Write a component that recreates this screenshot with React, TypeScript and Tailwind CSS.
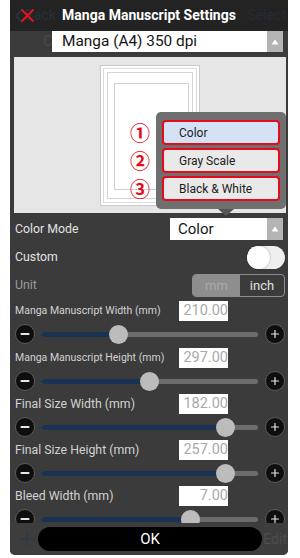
const font = { fontFamily: 'Roboto, "Liberation Sans", sans-serif' };

interface SliderRowProps {
  label: string;
  value: string;
  percent: number;
  small?: boolean;
  className?: string;
}

function Arrow() {
  return (
    <div className="w-[16px] h-full bg-[#b4b4b4] flex items-center justify-center">
      <svg width="8" height="6" viewBox="0 0 8 6">
        <path d="M4 0.5 L7.5 5.5 L0.5 5.5 Z" fill="#ffffff" />
      </svg>
    </div>
  );
}

function RoundButton({ plus }: { plus?: boolean }) {
  return (
    <div className="w-[20px] h-[20px] rounded-full bg-[#0e0e0e] border border-[#5a5a5a] flex items-center justify-center shrink-0">
      <svg width="10" height="10" viewBox="0 0 10 10">
        <path d="M1.5 5 H8.5" stroke="#e6e6e6" strokeWidth={plus ? 1.2 : 2.2} strokeLinecap="round" />
        {plus && <path d="M5 1.5 V8.5" stroke="#e6e6e6" strokeWidth="1.2" strokeLinecap="round" />}
      </svg>
    </div>
  );
}

function SliderRow({ label, value, percent, small, className }: SliderRowProps) {
  return (
    <div className={className}>

      {/* Label + value */}
      <div className="h-[20px] flex items-center">
        <div className={`w-[169px] pl-[5px] text-[#d2d2d2] whitespace-nowrap ${small ? "text-[10.5px]" : "text-[12.3px]"}`}>
          {label}
        </div>
        <div className="w-[49px] h-[20px] bg-white text-right text-[14.5px] leading-[20px] text-[#a9a9a9]">
          {value}
        </div>
      </div>

      {/* Slider */}
      <div className="h-[26px] flex items-center pl-[5px]">
        <RoundButton />
        <div className="relative w-[217px] h-[5px] ml-[6px] rounded-full bg-[#6c6c6c]">
          <div className="h-full rounded-full bg-[#1b3352]" style={{ width: `${percent}%` }} />
          <div
            className="absolute top-1/2 w-[19px] h-[19px] -mt-[9.5px] -ml-[9.5px] rounded-full bg-[#bcbcbc]"
            style={{ left: `${percent}%` }}
          />
        </div>
        <div className="ml-[7px]">
          <RoundButton plus />
        </div>
      </div>

    </div>
  );
}

export default function App() {
  const modes = ["Color", "Gray Scale", "Black & White"];
  const marks = ["①", "②", "③"];

  return (
    <div className="w-[300px] h-[558px] bg-white overflow-hidden pl-[10px]" style={font}>

      <div className="w-[278px] h-[555px] bg-[#3b3b3b] rounded-b-[5px] overflow-hidden flex flex-col">

        {/* Header */}
        <div className="relative h-[31px] shrink-0 bg-[#232323] flex items-center justify-center">
          <div className="absolute left-[4px] top-0 h-full flex items-center text-[14px] text-[#27313c]">
            <svg width="10" height="14" viewBox="0 0 10 14">
              <path d="M8 1 L2 7 L8 13" stroke="#27313c" strokeWidth="2" fill="none" />
            </svg>
            <span className="ml-[1px]">Back</span>
          </div>
          <svg className="absolute left-[10px] top-[8px]" width="15" height="15" viewBox="0 0 15 15">
            <path d="M1.5 1.5 L13.5 13.5 M13.5 1.5 L1.5 13.5" stroke="#e2151f" strokeWidth="2" />
          </svg>
          <div className="absolute right-[2px] top-0 h-full flex items-center text-[14px] text-[#252c35]">
            Select
          </div>
          <div className="relative text-[14px] font-bold text-white">
            Manga Manuscript Settings
          </div>
        </div>

        <div className="flex-1 overflow-hidden">

          {/* Preset dropdown */}
          <div className="h-[21px] flex items-center">
            <div className="w-[42px] pl-[33px] text-[15px] text-[#4a4a4a]">C</div>
            <div className="w-[231px] h-[21px] bg-white flex items-center">
              <div className="flex-1 pl-[10px] text-[15.4px] text-[#151515]">Manga (A4) 350 dpi</div>
              <Arrow />
            </div>
          </div>

          {/* Preview */}
          <div className="relative mt-[5px] ml-[4px] mr-[2px] h-[156px] bg-[#e6e6e6]">

            <div className="pt-[8px] pl-[86px]">
              <div className="w-[100px] h-[141px] bg-white border border-[#c9c9c9] p-[2px]">
                <div className="h-full border border-[#dadae2] p-[3px]">
                  <div className="h-full border border-[#d4d4dc] pt-[10px] pl-[6px] pr-[3px] pb-[8px]">
                    <div className="h-full border border-[#cfcfda]" />
                  </div>
                </div>
              </div>
            </div>

            {/* Color mode popup */}
            <div className="absolute left-[142px] top-[55px] w-[130px] h-[97px] rounded-[5px] bg-[#6f6f6f] px-[6px] pt-[8px] flex flex-col gap-[3px]">
              {modes.map((m, i) => (
                <div
                  key={m}
                  className={`h-[25px] rounded-[4px] border-2 border-[#e40b1a] pl-[15px] flex items-center text-[12px] text-[#1c1c1c] ${i === 0 ? "bg-[#d5e1f4]" : "bg-[#e9e9e9]"}`}
                >
                  {m}
                </div>
              ))}
              <div className="absolute left-[62px] -bottom-[7px] w-0 h-0 border-l-[8px] border-r-[8px] border-t-[7px] border-l-transparent border-r-transparent border-t-[#555555]" />
            </div>

            {/* Markers */}
            <div className="absolute left-[116px] top-[63px] flex flex-col gap-[3px]">
              {marks.map((n) => (
                <div
                  key={n}
                  className="h-[25px] flex items-center text-[20px] leading-[20px] font-bold text-[#e40b1a]"
                  style={{ fontFamily: '"Noto Sans CJK JP", "DejaVu Sans", sans-serif' }}
                >
                  {n}
                </div>
              ))}
            </div>

          </div>

          {/* Color Mode */}
          <div className="mt-[5px] h-[22px] flex items-center justify-between pl-[5px] pr-[5px]">
            <div className="text-[12.3px] text-[#e2e2e2]">Color Mode</div>
            <div className="w-[113px] h-[22px] bg-white flex items-center">
              <div className="flex-1 pl-[8px] text-[15px] text-[#151515]">Color</div>
              <Arrow />
            </div>
          </div>

          {/* Custom */}
          <div className="mt-[6px] h-[23px] flex items-center justify-between pl-[5px] pr-[3px]">
            <div className="text-[12.3px] text-[#e2e2e2]">Custom</div>
            <div className="w-[38px] h-[23px] rounded-full bg-[#efefef] flex items-center">
              <div className="w-[23px] h-[23px] rounded-full bg-white shadow-[0_0_2px_rgba(0,0,0,0.35)]" />
            </div>
          </div>

          {/* Unit */}
          <div className="mt-[5px] h-[23px] flex items-center justify-between pl-[5px] pr-[3px]">
            <div className="text-[12.3px] text-[#9c9c9c]">Unit</div>
            <div className="w-[93px] h-[23px] rounded-[4px] border border-[#8e8e8e] flex overflow-hidden text-[13px]">
              <div className="w-[47px] bg-[#8e8e8e] text-[#a9a9a9] flex items-center justify-center">mm</div>
              <div className="flex-1 text-[#e0e0e0] flex items-center justify-center">inch</div>
            </div>
          </div>

          <SliderRow className="mt-[4px]" label="Manga Manuscript Width (mm)" value="210.00" percent={35.5} small />
          <SliderRow className="mt-[1px]" label="Manga Manuscript Height (mm)" value="297.00" percent={50.2} small />
          <SliderRow label="Final Size Width (mm)" value="182.00" percent={85} />
          <SliderRow label="Final Size Height (mm)" value="257.00" percent={85} />
          <SliderRow label="Bleed Width (mm)" value="7.00" percent={69} />

        </div>

        {/* Footer */}
        <div className="h-[32px] shrink-0 bg-[#3d3d3d] flex items-center relative">
          <div className="absolute left-[10px] top-0 h-full flex items-center">
            <svg width="14" height="14" viewBox="0 0 14 14">
              <path d="M7 0 V14 M0 7 H14" stroke="#2d3a47" strokeWidth="1.5" />
            </svg>
          </div>
          <div className="absolute right-[1px] top-0 h-full flex items-center text-[14px] text-[#4d4d4d]">Edit</div>
          <div className="relative ml-[28px] w-[224px] h-[24px] rounded-full bg-black flex items-center justify-center text-[15px] text-white">
            OK
          </div>
        </div>

      </div>

    </div>
  );
}
